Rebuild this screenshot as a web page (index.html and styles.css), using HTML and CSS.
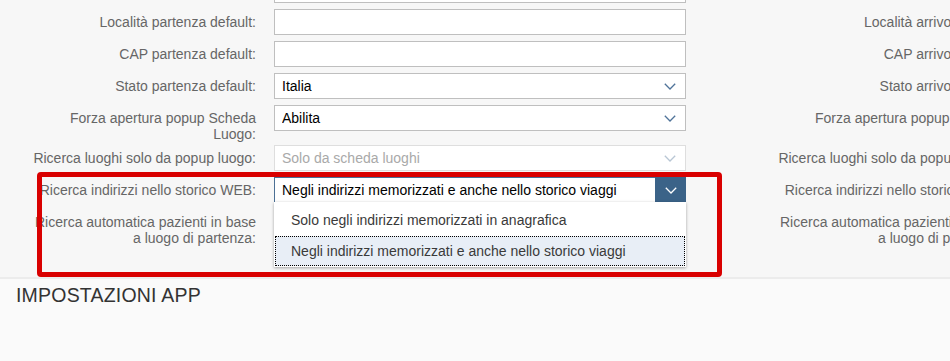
FILE: index.html
```html
<!DOCTYPE html>
<html lang="it">
<head>
  <meta charset="UTF-8" />
  <meta name="viewport" content="width=device-width, initial-scale=1.0" />
  <title>Impostazioni</title>
  <link rel="stylesheet" href="styles.css">
</head>
<body>
  <div class="form-section">
    <div class="form-grid">
      <!-- colonna partenza -->
      <div class="form-col">
        <div class="form-label">Indirizzo partenza default:</div>
        <div class="form-field"><div class="input"></div></div>

        <div class="form-label">Località partenza default:</div>
        <div class="form-field"><div class="input"></div></div>

        <div class="form-label">CAP partenza default:</div>
        <div class="form-field"><div class="input"></div></div>

        <div class="form-label">Stato partenza default:</div>
        <div class="form-field">
          <div class="input select">
            <span class="select-text">Italia</span>
            <span class="select-arrow"><svg width="12" height="7" viewBox="0 0 12 7"><polyline points="0.8,0.8 6,6 11.2,0.8" /></svg></span>
          </div>
        </div>

        <div class="form-label">Forza apertura popup Scheda Luogo:</div>
        <div class="form-field">
          <div class="input select">
            <span class="select-text">Abilita</span>
            <span class="select-arrow"><svg width="12" height="7" viewBox="0 0 12 7"><polyline points="0.8,0.8 6,6 11.2,0.8" /></svg></span>
          </div>
        </div>

        <div class="form-label">Ricerca luoghi solo da popup luogo:</div>
        <div class="form-field">
          <div class="input select disabled">
            <span class="select-text">Solo da scheda luoghi</span>
            <span class="select-arrow"><svg width="12" height="7" viewBox="0 0 12 7"><polyline points="0.8,0.8 6,6 11.2,0.8" /></svg></span>
          </div>
        </div>

        <div class="form-label">Ricerca indirizzi nello storico WEB:</div>
        <div class="form-field">
          <div class="input select open">
            <span class="select-text">Negli indirizzi memorizzati e anche nello storico viaggi</span>
            <span class="select-arrow"><svg width="12" height="7" viewBox="0 0 12 7"><polyline points="0.8,0.8 6,6 11.2,0.8" /></svg></span>
            <ul class="dropdown">
              <li class="dropdown-item">Solo negli indirizzi memorizzati in anagrafica</li>
              <li class="dropdown-item selected">Negli indirizzi memorizzati e anche nello storico viaggi</li>
            </ul>
          </div>
        </div>

        <div class="form-label">Ricerca automatica pazienti in base a luogo di partenza:</div>
        <div class="form-field"><div class="input"></div></div>
      </div>

      <!-- colonna arrivo -->
      <div class="form-col">
        <div class="form-label">Indirizzo arrivo default:</div>
        <div class="form-field"><div class="input"></div></div>

        <div class="form-label">Località arrivo default:</div>
        <div class="form-field"><div class="input"></div></div>

        <div class="form-label">CAP arrivo default:</div>
        <div class="form-field"><div class="input"></div></div>

        <div class="form-label">Stato arrivo default:</div>
        <div class="form-field"><div class="input"></div></div>

        <div class="form-label">Forza apertura popup Scheda Luogo:</div>
        <div class="form-field"><div class="input"></div></div>

        <div class="form-label">Ricerca luoghi solo da popup luogo:</div>
        <div class="form-field"><div class="input"></div></div>

        <div class="form-label">Ricerca indirizzi nello storico WEB:</div>
        <div class="form-field"><div class="input"></div></div>

        <div class="form-label">Ricerca automatica pazienti in base a luogo di partenza:</div>
        <div class="form-field"><div class="input"></div></div>
      </div>
    </div>

    <div class="highlight"></div>
  </div>

  <div class="app-section">
    <h2 class="section-title">IMPOSTAZIONI APP</h2>
  </div>
</body>
</html>
```

FILE: styles.css
```css
body {
  margin: 0;
  font-family: 'Liberation Sans', Arial, sans-serif;
  font-size: 14px;
  background-color: #fafafa;
  color: #333;
  overflow: hidden;
}

.form-section {
  position: relative;
  margin-top: -26px;
  padding-bottom: 31px;
  background-color: #f7f7f7;
  border-bottom: 2px solid #ececec;
  overflow: hidden;
}

.form-grid {
  display: grid;
  grid-template-columns: 745px 745px;
  width: 1490px;
}

.form-col {
  display: grid;
  grid-template-columns: 223px 412px;
  column-gap: 18px;
  padding-left: 33px;
}

.form-label {
  padding-top: 8px;
  line-height: 16px;
  text-align: right;
  color: #666;
}

.form-field {
  padding: 3px 0;
}

.input {
  box-sizing: border-box;
  height: 26px;
  background-color: #fff;
  border: 1px solid #bfbfbf;
  padding-left: 7px;
  color: #000;
}

.select {
  position: relative;
  display: flex;
  align-items: center;
}

.select-text {
  flex: 1;
  white-space: nowrap;
  overflow: hidden;
}

.select-arrow {
  display: flex;
  align-items: center;
  justify-content: center;
  width: 30px;
  align-self: stretch;
}

.select-arrow polyline {
  fill: none;
  stroke: #4f7399;
  stroke-width: 1.3;
}

.select.disabled {
  border-color: #dedede;
  color: #a9a9a9;
}

.select.disabled polyline {
  stroke: #b8c6d4;
}

.select.open {
  border-color: #4c7095;
}

.select.open .select-arrow {
  background-color: #3b6388;
  margin-right: -1px;
  margin-top: -1px;
  margin-bottom: -1px;
  width: 31px;
}

.select.open polyline {
  stroke: #fff;
}

.dropdown {
  position: absolute;
  top: 100%;
  left: -1px;
  right: -1px;
  margin: 0;
  padding: 0 1px 1px;
  list-style: none;
  background-color: #fff;
  box-shadow: 0 1px 3px rgba(0, 0, 0, 0.35);
  z-index: 2;
}

.dropdown-item {
  box-sizing: border-box;
  height: 34px;
  line-height: 34px;
  padding-left: 15px;
  color: #3a3a3a;
  border: 1px solid transparent;
}

.dropdown-item.selected {
  height: 30px;
  line-height: 28px;
  background-color: #e8eef6;
  border: 1px dotted #000;
}

.highlight {
  position: absolute;
  left: 37px;
  top: 198px;
  width: 685px;
  height: 105px;
  box-sizing: border-box;
  border: 5px solid #d90000;
  border-radius: 4px;
  z-index: 3;
}

.app-section {
  height: 100px;
  padding: 5px 16px;
}

.section-title {
  margin: 0;
  font-family: 'Liberation Sans', Arial, sans-serif;
  font-size: 19.5px;
  font-weight: 400;
  line-height: 22px;
  letter-spacing: 0.2px;
  color: #333;
}
```
